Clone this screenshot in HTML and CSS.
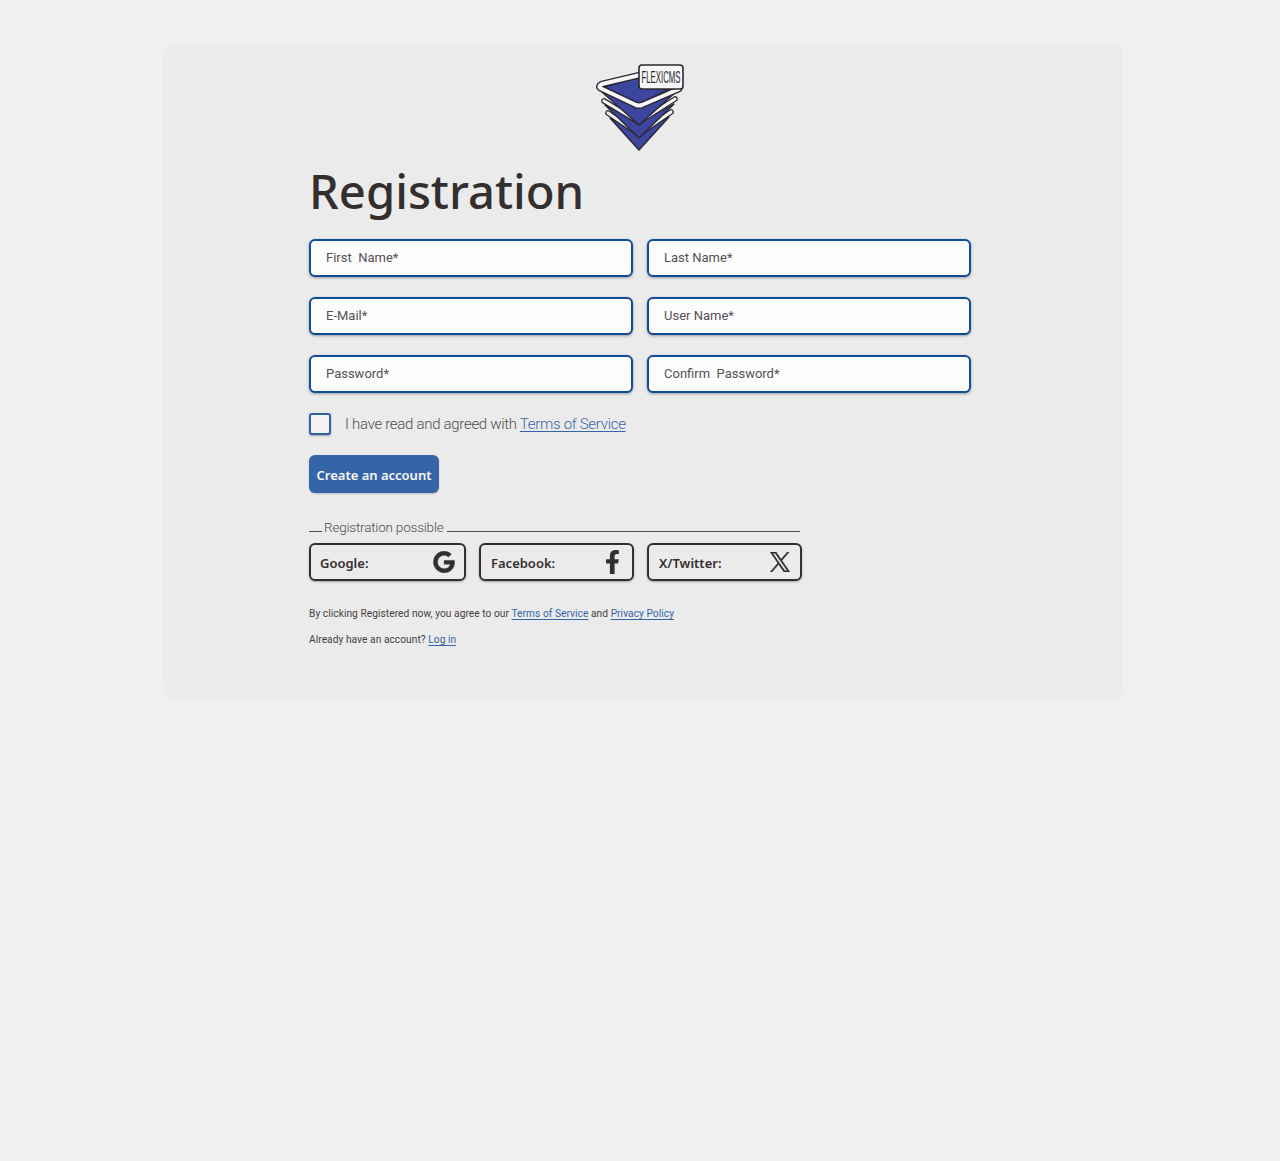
FILE: index.html
```html
<!DOCTYPE html>
<html lang="en">
<head>
<meta charset="utf-8">
<title>Registration</title>
<link rel="stylesheet" href="styles.css">
</head>
<body>
<main class="card">
  <div class="logo-row">
    <svg class="logo" width="88" height="90" viewBox="0 0 88 90" aria-label="FlexiCMS logo">
      <path class="logo-blue" d="M14 54 L43 86 L73 53 L43 68 Z"/>
      <path class="logo-edge" d="M12 49 L43 70 L75 48"/>
      <path class="logo-white" d="M12 49 L43 70 L75 48"/>
      <path class="logo-blue" d="M9 41 L43 74 L78 40 L43 58 Z"/>
      <path class="logo-edge" d="M8 37 L43 58 L79 35"/>
      <path class="logo-white" d="M8 37 L43 58 L79 35"/>
      <path class="logo-blue" d="M6 28 L43 61 L81 27 L43 40 Z"/>
      <path class="logo-blue" d="M8 23 L40 14 L82 21 L43 40 Z"/>
      <path class="logo-edge logo-top" d="M44 11 L6 20 Q2 22 4 24 L40 41 Q43 42 46 41 L83 25"/>
      <path class="logo-white logo-top" d="M44 11 L6 20 Q2 22 4 24 L40 41 Q43 42 46 41 L83 25"/>
      <rect class="logo-tag" x="43" y="1" width="44" height="24" rx="3"/>
      <text class="logo-text" transform="translate(65 19) scale(.46 1)" text-anchor="middle">FLEXICMS</text>
    </svg>
  </div>
  <div class="content">
    <h1 class="title">Registration</h1>
    <form class="form">
      <div class="fields">
        <input class="field" type="text" placeholder="First  Name*">
        <input class="field" type="text" placeholder="Last Name*">
        <input class="field" type="text" placeholder="E-Mail*">
        <input class="field" type="text" placeholder="User Name*">
        <input class="field" type="text" placeholder="Password*">
        <input class="field" type="text" placeholder="Confirm  Password*">
      </div>
      <label class="agree">
        <span class="check"></span>
        <span>I have read and agreed with <a class="link link-strong" href="#">Terms of Service</a></span>
      </label>
      <button class="submit" type="button">Create an account</button>
      <div class="legend">
        <span class="legend-stub"></span>
        <span class="legend-text">Registration possible</span>
        <span class="legend-rule"></span>
      </div>
      <div class="socials">
        <a class="social social-google" href="#">
          <span class="social-label">Google:</span>
          <svg class="icon-g" width="22" height="22" viewBox="0 0 488 512"><path fill="#332e2f" stroke="#332e2f" stroke-width="12" d="M488 261.800C488 403.300 391.100 504 248 504 110.800 504 0 393.200 0 256S110.800 8 248 8c66.800 0 123 24.500 166.300 64.900l-67.500 64.900C258.500 52.600 94.300 116.600 94.300 256c0 86.500 69.100 156.600 153.700 156.600 98.200 0 135-70.400 140.800-106.900H248v-85.300h236.100c2.300 12.700 3.900 24.900 3.900 41.400z"/></svg>
        </a>
        <a class="social social-facebook" href="#">
          <span class="social-label">Facebook:</span>
          <svg class="icon-f" width="15" height="24" viewBox="0 0 320 512"><path fill="#332e2f" d="M279.140 288l14.220-92.660h-88.910v-60.130c0-25.350 12.420-50.060 52.240-50.060h40.420V6.260S260.430 0 225.360 0c-73.220 0-121.080 44.380-121.080 124.720v70.620H22.890V288h81.390v224h100.170V288z"/></svg>
        </a>
        <a class="social social-x" href="#">
          <span class="social-label">X/Twitter:</span>
          <svg class="icon-x" width="20" height="20" viewBox="0 0 24 24"><path fill="#332e2f" stroke="#332e2f" stroke-width=".7" d="M14.234 10.162 22.977 0h-2.072l-7.591 8.824L7.251 0H.258l9.168 13.343L.258 24H2.330l8.016-9.318L16.749 24h6.993zm-2.837 3.299-.929-1.329L3.076 1.560h3.182l5.965 8.532.929 1.329 7.754 11.091h-3.182z"/></svg>
        </a>
      </div>
      <p class="note note-first">By clicking Registered now, you agree to our <a class="link" href="#">Terms of Service</a> and <a class="link" href="#">Privacy Policy</a></p>
      <p class="note">Already have an account? <a class="link" href="#">Log in</a></p>
    </form>
  </div>
</main>
</body>
</html>
```
FILE: styles.css
```css
* { box-sizing: border-box; }
html, body { margin: 0; }
body {
  min-height: 1161px;
  background: #f0f0f0;
  padding: 43px 157px 0 163px;
  font-family: "Roboto", "Liberation Sans", sans-serif;
  color: #504c4d;
}
.card {
  width: 960px;
  height: 657px;
  background: #ebebeb;
  border-radius: 14px;
  padding: 21px 152px 0 146px;
}
.logo-row { display: flex; justify-content: center; height: 90px; }
.logo-blue { fill: #3c469f; stroke: #2b2730; stroke-width: 1.4; stroke-linejoin: round; }
.logo-edge { fill: none; stroke: #2b2730; stroke-width: 5.6; stroke-linejoin: round; stroke-linecap: round; }
.logo-white { fill: none; stroke: #f7f7f7; stroke-width: 3.2; stroke-linejoin: round; stroke-linecap: round; }
.logo-edge.logo-top { stroke-width: 6.6; }
.logo-white.logo-top { stroke-width: 4; }
.logo-tag { fill: #f7f7f7; stroke: #2b2730; stroke-width: 1.6; }
.logo-text { font-family: "Liberation Sans", sans-serif; font-size: 17px; fill: #2b2730; }
.title {
  margin: 0;
  height: 60px;
  font-family: "Noto Sans", sans-serif;
  font-weight: 500;
  font-size: 47.200px;
  line-height: 74px;
  color: #342e2f;
}
.form { margin-top: 25px; }
.fields { display: grid; grid-template-columns: 324px 324px; column-gap: 14px; row-gap: 20px; }
.field {
  height: 38px;
  padding: 0 15px 2px;
  background: #fcfcfc;
  border: 2px solid #0f4c9c;
  border-radius: 6px;
  box-shadow: 0 1px 3px rgba(0,0,0,.35);
  font-family: "Roboto", sans-serif;
  font-size: 13px;
  font-weight: 400;
  outline: none;
}
.field::placeholder { color: #555152; opacity: 1; }
.agree { display: flex; align-items: center; gap: 14px; margin-top: 20px; height: 22px; font-size: 15px; letter-spacing: -.3px; font-weight: 300; color: #504c4d; }
.check { width: 22px; height: 22px; background: #f4f4f4; border: 2px solid #2f5fa5; border-radius: 3px; box-shadow: 0 1px 2px rgba(0,0,0,.3); }
.link { color: #3565a8; text-decoration: underline; text-underline-offset: 2px; text-decoration-thickness: 1px; }
.submit {
  display: block;
  margin-top: 20px;
  width: 130px;
  height: 38px;
  padding: 2px 0 0;
  border: 0;
  border-radius: 6px;
  background: #3565a8;
  color: #f7f7f7;
  font-family: "Noto Sans", sans-serif;
  font-size: 13px;
  font-weight: 600;
  box-shadow: 0 1px 2px rgba(0,0,0,.2);
}
.legend { display: flex; align-items: flex-end; width: 491px; height: 20px; margin-top: 23px; font-size: 13.500px; letter-spacing: -.2px; font-weight: 300; color: #504c4d; }
.legend-stub { width: 13px; border-bottom: 1px solid #504c4d; margin-bottom: 4px; }
.legend-rule { flex: 1; border-bottom: 1px solid #504c4d; margin-bottom: 4px; }
.legend-text { padding: 0 3px 0 2px; line-height: 18px; }
.socials { display: flex; gap: 13px; margin-top: 7px; width: 493px; }
.social {
  display: flex;
  align-items: center;
  justify-content: space-between;
  height: 38px;
  border: 2px solid #342e2f;
  border-radius: 6px;
  box-shadow: 0 1px 2px rgba(0,0,0,.3);
  color: #342e2f;
  font-family: "Noto Sans", sans-serif;
  font-size: 13px;
  font-weight: 600;
  text-decoration: none;
}
.social-label { padding-top: 2px; }
.social-google { width: 157px; padding: 0 9px; }
.social-facebook { width: 155px; padding: 0 12px 0 10px; }
.social-x { width: 155px; padding: 0 10px; }
.note { margin: 0; font-size: 10.200px; line-height: 14px; letter-spacing: .05px; color: #444041; }
.note-first { margin-top: 26px; margin-bottom: 12px; }
```
